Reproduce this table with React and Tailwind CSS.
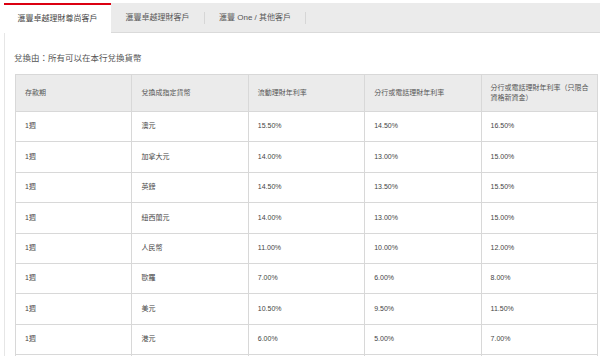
import React from 'react';

const rows = [
  ['1週', '澳元', '15.50%', '14.50%', '16.50%'],
  ['1週', '加拿大元', '14.00%', '13.00%', '15.00%'],
  ['1週', '英鎊', '14.50%', '13.50%', '15.50%'],
  ['1週', '紐西蘭元', '14.00%', '13.00%', '15.00%'],
  ['1週', '人民幣', '11.00%', '10.00%', '12.00%'],
  ['1週', '歐羅', '7.00%', '6.00%', '8.00%'],
  ['1週', '美元', '10.50%', '9.50%', '11.50%'],
  ['1週', '港元', '6.00%', '5.00%', '7.00%'],
];

const App = () => {
  return (
    <div className="w-[600px] h-[356px] overflow-hidden bg-white pt-[3px] pl-[4px] font-['Liberation_Sans','Noto_Sans_CJK_TC',sans-serif]">

      {/* Tabs */}
      <div className="flex h-[30px]">
        <div className="w-[107px] shrink-0 bg-white border-t-2 border-[#db0011] flex items-center justify-center text-[8px] text-[#444]">
          滙豐卓越理財尊尚客戶
        </div>
        <div className="flex-1 flex items-center bg-[#ebebeb] border-b border-[#dadada]">
          <div className="w-[93px] flex items-center justify-center text-[8px] text-[#555]">
            滙豐卓越理財客戶
          </div>
          <div className="w-px h-[12px] bg-[#d6d6d6]" />
          <div className="w-[100px] flex items-center justify-center text-[8px] text-[#555]">
            滙豐 One / 其他客戶
          </div>
          <div className="w-px h-[12px] bg-[#d6d6d6]" />
        </div>
      </div>

      {/* Content */}
      <div className="border-l border-[#e6e6e6] pl-[9px] pt-[19px]">
        <p className="text-[8.5px] leading-[12px] text-[#555]">兌換由：所有可以在本行兌換貨幣</p>

        <table className="mt-[10px] ml-px w-[583px] table-fixed border-collapse text-[7px] text-[#444]">
          <thead>
            <tr className="bg-[#ebebeb] text-[#555]">
              <th className="h-[37px] border border-[#d8d8d8] px-[9px] text-left font-normal align-middle">存款期</th>
              <th className="border border-[#d8d8d8] px-[9px] text-left font-normal align-middle">兌換成指定貨幣</th>
              <th className="border border-[#d8d8d8] px-[9px] text-left font-normal align-middle">流動理財年利率</th>
              <th className="border border-[#d8d8d8] px-[9px] text-left font-normal align-middle">分行或電話理財年利率</th>
              <th className="border border-[#d8d8d8] pl-[9px] pr-0 text-left font-normal align-middle leading-[10px] whitespace-nowrap">
                分行或電話理財年利率（只限合<br />資格新資金）
              </th>
            </tr>
          </thead>
          <tbody>
            {rows.map((r, i) => (
              <tr key={i}>
                {r.map((c, j) => (
                  <td key={j} className="h-[30.4px] border border-[#d8d8d8] px-[9px] align-middle">
                    {c}
                  </td>
                ))}
              </tr>
            ))}
            <tr>
              <td className="h-[30px] border border-[#d8d8d8]" />
              <td className="border border-[#d8d8d8]" />
              <td className="border border-[#d8d8d8]" />
              <td className="border border-[#d8d8d8]" />
              <td className="border border-[#d8d8d8]" />
            </tr>
          </tbody>
        </table>
      </div>
    </div>
  );
};

export default App;
